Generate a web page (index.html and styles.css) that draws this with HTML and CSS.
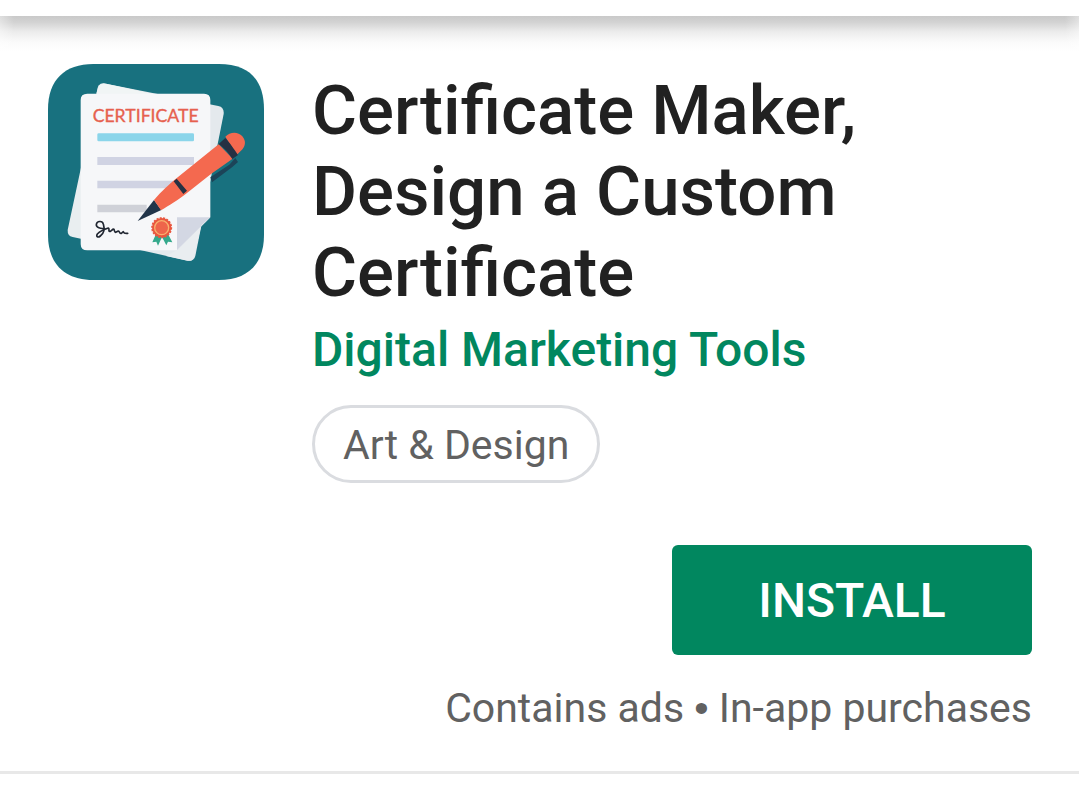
FILE: index.html
```html
<!DOCTYPE html>
<html lang="en">
<head>
    <meta charset="UTF-8">
    <meta name="viewport" content="width=device-width, initial-scale=1.0">
    <title>Certificate Maker, Design a Custom Certificate</title>
    <link rel="stylesheet" href="styles.css">
</head>
<body>
    <div class="topBar"></div>
    <main class="appBox">
        <div class="appHead">
            <svg class="appIcon" viewBox="24 24 648 648" role="img" aria-label="Certificate Maker icon">
                <path d="M160 24 H536 C632 24 672 76 672 160 V536 C672 622 626 672 536 672 H160 C72 672 24 622 24 536 V160 C24 72 74 24 160 24Z" fill="#18717f"/>
                <!-- back sheets -->
                <path d="M190 82 L535 150 Q553 154 551 174 L466 600 Q462 616 444 614 L290 580 L170 110 Q172 82 190 82Z" fill="#e4e9ed"/>
                <path d="M124 330 L83 522 Q82 540 98 543 L140 552Z" fill="#e9eef0"/>
                <path d="M176 90 Q184 80 198 83 L350 116 H168Z" fill="#f1f5f5"/>
                <!-- front sheet -->
                <path d="M142 113 H492 Q511 113 511 132 V484 L411 583 H142 Q122 583 122 563 V132 Q122 113 142 113Z" fill="#f6f7f9"/>
                <path d="M411 484 H511 L411 583Z" fill="#d3d7e3"/>
                <path d="M511 484 L484 508 L462 602 Q458 617 442 614 L378 600 L411 583Z" fill="#e9edf0"/>
                <text class="iconText" x="317" y="198" text-anchor="middle">CERTIFICATE</text>
                <rect x="172" y="232" width="290" height="24" rx="4" fill="#8bd5ea"/>
                <path d="M172 303 H462 V327 H172Z M172 374 H400 V397 H172Z" fill="#d0d3e3"/>
                <path d="M172 446 H320 V469 H172Z" fill="#cfd1d8"/>
                <path d="M193 517 C182 519 168 515 169 505 C171 495 187 493 190 504 C194 517 192 532 181 540 C174 546 167 542 172 534 C180 526 192 520 205 516 C210 517 203 528 211 526 L220 519 C226 519 220 528 227 529 L235 525 C240 526 237 534 244 532 L250 527 C252 533 257 533 263 532" fill="none" stroke="#202631" stroke-width="5" stroke-linecap="round" stroke-linejoin="round"/>
                <!-- ribbon seal -->
                <path d="M347 536 L337 559 L349 557 L354 569 L366 543 L379 568 L384 557 L397 559 L384 534Z" fill="#35a98c"/>
                <circle cx="365" cy="515" r="29" fill="#e9573f" stroke="#e9573f" stroke-width="5" stroke-dasharray="6 4"/>
                <circle cx="365" cy="515" r="21" fill="#ee654b" stroke="#f8b16e" stroke-width="4"/>
                <!-- pen -->
                <path d="M586 306 L594 318 L576 334 L516 379 L511 364 L568 326Z" fill="#1c4458"/>
                <path d="M293 495 L342 432 L364 462Z" fill="#213449"/>
                <path d="M342 432 C365 405 390 384 402 373 L536 265 L578 308 L513 354 L440 412 C410 435 388 448 363 463Z" fill="#f4694f"/>
                <path d="M556 242 C570 227 594 226 607 241 C620 256 616 274 602 285 L590 297Z" fill="#f4694f"/>
                <path d="M536 264 L556 246 C566 256 585 283 594 297 L577 309 C568 293 552 275 536 264Z M401 376 L410 368 L441 404 L430 414Z" fill="#263143"/>
            </svg>
            <div class="appInfo">
                <h1 class="appName">Certificate Maker, Design a Custom Certificate</h1>
                <a class="developer" href="#">Digital Marketing Tools</a>
                <a class="category" href="#">Art &amp; Design</a>
            </div>
        </div>
        <div class="installBox">
            <button class="installBtn" type="button">INSTALL</button>
            <p class="notice">Contains ads <span class="dot">•</span> In-app purchases</p>
        </div>
    </main>
</body>
</html>
```
FILE: styles.css
```css
*{
    padding: 0;
    margin: 0;
    box-sizing: border-box;
}
body{
    font-family: Roboto, "Liberation Sans", sans-serif;
    color: #212121;
    background: #fff;
}
a{
    text-decoration: none;
}
.topBar{
    position: relative;
    height: 16px;
    background: #fff;
}
/* shadow under the bar, lighter at both ends */
.topBar::after{
    content: "";
    position: absolute;
    top: 16px;
    left: 0;
    right: 0;
    height: 36px;
    background:
        linear-gradient(90deg, rgba(255,255,255,0.4), rgba(255,255,255,0) 14px),
        linear-gradient(270deg, rgba(255,255,255,0.4), rgba(255,255,255,0) 14px),
        linear-gradient(#c9c9c9, #d3d3d3 18%, #ececec 44%, #fafafa 72%, #fff);
}
.appBox{
    padding: 48px 47px 38px 48px;
    border-bottom: 3px solid #e8e8e8;
}
.appHead{
    display: flex;
    align-items: flex-start;
    gap: 48px;
}
.appIcon{
    flex: none;
    width: 216px;
    height: 216px;
}
.iconText{
    font-family: Lato, sans-serif;
    font-size: 53px;
    fill: #e6604e;
    stroke: #e6604e;
}
.appInfo{
    display: flex;
    flex-direction: column;
    align-items: flex-start;
    max-width: 600px;
    padding-top: 6px;
}
.appName{
    font-size: 69px;
    line-height: 81px;
    font-weight: 500;
}
.developer{
    margin-top: 9px;
    font-size: 48px;
    line-height: 56px;
    font-weight: 500;
    color: #01875f;
}
.category{
    margin-top: 27px;
    padding: 2px 28px 0;
    border: 3px solid #dadce0;
    border-radius: 39px;
    font-size: 41px;
    line-height: 70px;
    color: #616161;
}
.installBox{
    display: flex;
    flex-direction: column;
    align-items: flex-end;
    margin-top: 62px;
}
.installBtn{
    width: 360px;
    height: 110px;
    border: none;
    border-radius: 6px;
    background: #01875f;
    color: #fff;
    font-family: inherit;
    font-size: 48px;
    font-weight: 500;
    cursor: pointer;
}
.notice{
    margin-top: 29px;
    font-size: 41px;
    line-height: 49px;
    color: #616161;
}
.dot{
    font-family: "Liberation Sans", sans-serif;
}
```
